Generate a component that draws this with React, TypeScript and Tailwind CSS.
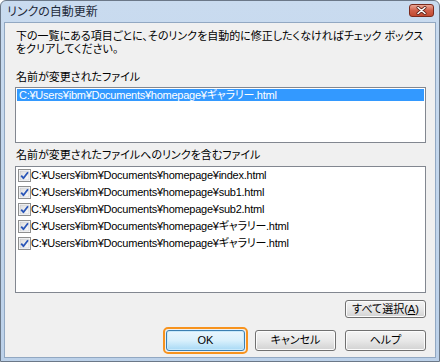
import React from "react";

const FONT = "font-['Liberation_Sans','Noto_Sans_CJK_JP',sans-serif]";

const linkedFiles = [
  "C:¥Users¥ibm¥Documents¥homepage¥index.html",
  "C:¥Users¥ibm¥Documents¥homepage¥sub1.html",
  "C:¥Users¥ibm¥Documents¥homepage¥sub2.html",
  "C:¥Users¥ibm¥Documents¥homepage¥ギャラリー.html",
  "C:¥Users¥ibm¥Documents¥homepage¥ギャラリー.html",
];

function CheckBox() {
  return (
    <svg width="13" height="13" viewBox="0 0 13 13" className="shrink-0">
      <defs>
        <linearGradient id="cbg" x1="0" y1="0" x2="1" y2="1">
          <stop offset="0" stopColor="#dcdcdc" />
          <stop offset="1" stopColor="#fbfbfb" />
        </linearGradient>
      </defs>
      <rect x="0.5" y="0.5" width="12" height="12" fill="#fff" stroke="#8e8f8f" />
      <rect x="2" y="2" width="9" height="9" fill="url(#cbg)" stroke="#b8bcc4" strokeWidth="0.5" />
      <path d="M3.2 6.6 L5.4 9.2 L10 3.2" fill="none" stroke="#2a56b8" strokeWidth="1.8" strokeLinejoin="round" />
    </svg>
  );
}

function Button({
  label,
  width,
  height = 21,
}: {
  label: React.ReactNode;
  width: number;
  height?: number;
}) {
  return (
    <button
      className="flex items-center justify-center rounded-[3px] border border-[#707070] bg-linear-to-b from-[#f4f4f4] via-[#e8e8e8] to-[#d2d2d2] text-[11px] leading-none text-black shadow-[inset_0_0_0_1px_#fcfcfc]"
      style={{ width, height }}
    >
      {label}
    </button>
  );
}

export default function App() {
  return (
    <div
      className={`${FONT} [font-feature-settings:'palt'] w-[440px] h-[362px] flex flex-col rounded-t-[6px] border border-[#6b7888] bg-linear-to-b from-[#c9dbef] to-[#bcd1e9] text-black overflow-hidden`}
    >
      {/* Title bar */}
      <div className="h-[21px] shrink-0 flex items-center justify-between pl-[6px] pr-[5px]">
        <span className="text-[12px] leading-none text-[#1e2a3a] pt-[1px]">リンクの自動更新</span>
        <div className="w-[25px] h-[13px] mt-[-2px] rounded-[3px] border border-[#7b2a1c] bg-linear-to-b from-[#e9a797] via-[#d0604a] to-[#c24a30] flex items-center justify-center">
          <svg width="11" height="9" viewBox="0 0 11 9">
            <path d="M2 1.5 L9 7.5 M9 1.5 L2 7.5" stroke="#5a2018" strokeWidth="3" strokeLinecap="round" />
            <path d="M2 1.5 L9 7.5 M9 1.5 L2 7.5" stroke="#ffffff" strokeWidth="1.6" strokeLinecap="round" />
          </svg>
        </div>
      </div>

      {/* Client area */}
      <div className="flex-1 mx-[3px] mb-[3px] border border-[#92a8c2] bg-[#f0f0f0] flex flex-col pl-[10px] pr-[9px] pt-[7px] text-[11px]">
        <p className="pl-[1px] leading-[13px] whitespace-nowrap">
          下の一覧にある項目ごとに、そのリンクを自動的に修正したくなければチェック ボックス
          <br />
          をクリアしてください。
        </p>

        <div className="mt-[15px] pl-[1px] leading-[13px]">名前が変更されたファイル</div>
        <div className="mt-[3px] h-[56px] shrink-0 border border-[#828790] bg-white p-[1px]">
          <div className="h-[12px] bg-[#3399ff] text-white leading-[12px] pl-[2px] tracking-[-0.25px] whitespace-nowrap">
            C:¥Users¥ibm¥Documents¥homepage¥ギャラリー.html
          </div>
        </div>

        <div className="mt-[6px] pl-[1px] leading-[13px]">名前が変更されたファイルへのリンクを含むファイル</div>
        <div className="mt-[4px] h-[127px] shrink-0 border border-[#828790] bg-white pl-[1px] pt-[0px] flex flex-col">
          {linkedFiles.map((f, i) => (
            <div key={i} className="h-[17px] flex items-center pl-[1px]">
              <CheckBox />
              <span className="leading-none tracking-[-0.25px] whitespace-nowrap">{f}</span>
            </div>
          ))}
        </div>

        <div className="mt-[7px] flex justify-end">
          <Button
            width={81}
            height={18}
            label={
              <span>
                すべて選択(<span className="underline">A</span>)
              </span>
            }
          />
        </div>

        <div className="mt-[9px] flex justify-end items-center">
          <div className="rounded-[5px] border-2 border-[#f7931e] p-[1px] mr-[7px]">
            <button className="w-[79px] h-[21px] flex items-center justify-center rounded-[3px] border border-[#3c7fb1] bg-linear-to-b from-[#eaf6fd] via-[#d9f0fc] to-[#a7d9f5] text-[11px] leading-none text-black shadow-[inset_0_0_0_1px_#c8e9fb]">
              OK
            </button>
          </div>
          <div className="mr-[9px]">
            <Button width={81} label="キャンセル" />
          </div>
          <Button width={81} label="ヘルプ" />
        </div>
      </div>
    </div>
  );
}
